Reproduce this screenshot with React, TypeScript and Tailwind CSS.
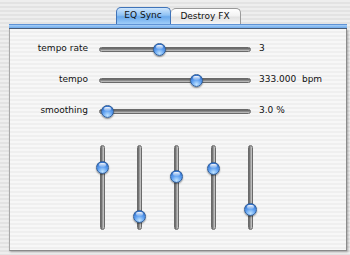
import React from "react";

const ROWS = [
  { label: "tempo rate", value: "3", pos: 55 / 140 },
  { label: "tempo", value: "333.000  bpm", pos: 92 / 140 },
  { label: "smoothing", value: "3.0 %", pos: 3 / 140 },
];

const BANDS = [16 / 73, 66 / 73, 25 / 73, 17 / 73, 59 / 73];

function Knob({ style }: { style: React.CSSProperties }) {
  return (
    <div
      className="absolute w-[13px] h-[13px] rounded-full border border-[#2f5d98] bg-[radial-gradient(circle_at_50%_85%,#bfe3ff_0%,#5e9ff0_45%,#2563c4_100%)] shadow-[0_1px_1.5px_rgba(0,0,0,0.45)]"
      style={style}
    >
      <div className="absolute left-[2px] top-[1px] w-[7px] h-[4px] rounded-full bg-[linear-gradient(to_bottom,rgba(255,255,255,0.95),rgba(255,255,255,0.15))]" />
    </div>
  );
}

export default function App() {
  return (
    <div
      className="w-[350px] h-[255px] overflow-hidden pt-[7px] pl-[9px] text-[9px] text-[#111] bg-[repeating-linear-gradient(to_bottom,#eeeeee_0px,#eeeeee_2px,#e3e3e3_2px,#e3e3e3_4px)]"
      style={{ fontFamily: '"DejaVu Sans", sans-serif' }}
    >
      <div className="w-[338px]">
        {/* tabs */}
        <div className="flex justify-center items-end h-[17px]">
          <div className="w-[55px] h-[17px] flex items-center justify-center rounded-t-[5px] border border-b-0 border-[#3f73b8] bg-[linear-gradient(to_bottom,#cfe6fd_0%,#8fc2f4_45%,#6aa9ec_55%,#a0cdf8_100%)]">
            EQ Sync
          </div>
          <div className="w-[70px] h-[16px] flex items-center justify-center rounded-t-[5px] border border-b-0 border-l-0 border-[#9a9a9a] bg-[linear-gradient(to_bottom,#ffffff_0%,#f2f2f2_45%,#e2e2e2_55%,#f4f4f4_100%)]">
            Destroy FX
          </div>
        </div>
        {/* blue strip */}
        <div className="h-[5px] border-t border-[#5f93d6] border-b border-b-[#4d5f7a] bg-[linear-gradient(to_bottom,#a9d0f7,#6ea9ea)]" />
        {/* panel body */}
        <div className="h-[222px] border-l border-l-[#a8a8a8] border-r border-r-[#8c8c8c] border-b border-b-[#8a8a8a] shadow-[1px_1px_2px_rgba(0,0,0,0.3)] bg-[repeating-linear-gradient(to_bottom,#f7f7f7_0px,#f7f7f7_2px,#efefef_2px,#efefef_4px)] pt-[12px]">
          <div className="flex flex-col gap-[15px]">
            {ROWS.map((r) => (
              <div key={r.label} className="flex items-center h-[16px]">
                <div className="w-[78px] text-right">{r.label}</div>
                <div className="relative ml-[11px] w-[152px] h-[5px] rounded-full border border-[#6a6a6a] bg-[linear-gradient(to_bottom,#5e5e5e,#8c8c8c_50%,#cccccc)]">
                  <Knob style={{ left: r.pos * 139 - 1.5, top: -5 }} />
                </div>
                <div className="ml-[8px] whitespace-pre">{r.value}</div>
              </div>
            ))}
          </div>
          <div className="flex gap-[24px] ml-[86px] mt-[26px]">
            {BANDS.map((b, i) => (
              <div key={i} className="relative w-[13px] h-[85px] flex justify-center">
                <div className="w-[5px] h-[85px] rounded-full border border-[#6a6a6a] bg-[linear-gradient(to_right,#5e5e5e,#9a9a9a_50%,#d0d0d0)]" />
                <Knob style={{ top: b * 72, left: 0 }} />
              </div>
            ))}
          </div>
        </div>
      </div>
    </div>
  );
}
